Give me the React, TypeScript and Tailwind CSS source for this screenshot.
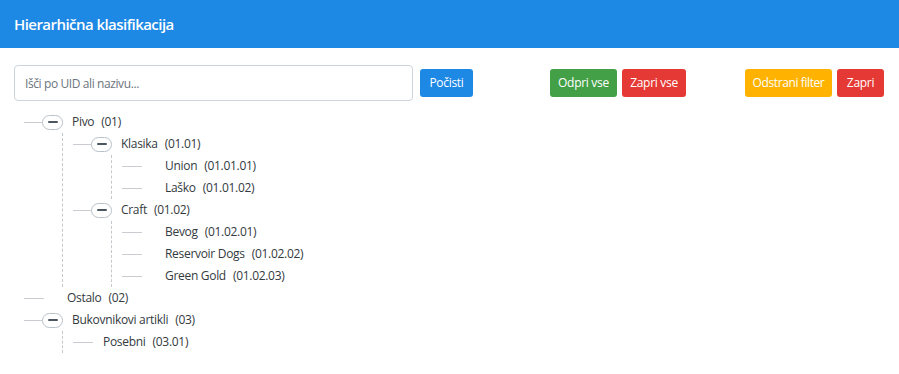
import React from "react";

type Node = {
  name: string;
  code: string;
  pad?: number;
  children?: Node[];
};

const tree: Node[] = [
  {
    name: "Pivo",
    code: "01",
    children: [
      {
        name: "Klasika",
        code: "01.01",
        children: [
          { name: "Union", code: "01.01.01" },
          { name: "Laško", code: "01.01.02" },
        ],
      },
      {
        name: "Craft",
        code: "01.02",
        children: [
          { name: "Bevog", code: "01.02.01" },
          { name: "Reservoir Dogs", code: "01.02.02" },
          { name: "Green Gold", code: "01.02.03" },
        ],
      },
    ],
  },
  { name: "Ostalo", code: "02" },
  {
    name: "Bukovnikovi artikli",
    code: "03",
    children: [{ name: "Posebni", code: "03.01", pad: 10 }],
  },
];

const Toggle = () => (
  <span className="w-[21px] h-[15px] rounded-full border border-[#b9c1c9] bg-white flex items-center justify-center shrink-0">
    <span className="w-[10px] h-[2px] bg-[#4b5661] rounded-sm" />
  </span>
);

const TreeNode = ({ node }: { node: Node }) => {
  const hasKids = !!node.children?.length;
  return (
    <div>
      <div className="h-[22px] flex items-center">
        {hasKids ? (
          <>
            <span className="w-[18px] h-px bg-[#c9cdd2]" />
            <Toggle />
            <span className="w-[9px]" />
          </>
        ) : (
          <>
            <span className="w-[20px] h-px bg-[#c9cdd2]" />
            <span style={{ width: node.pad ?? 23 }} />
          </>
        )}
        <span className="text-[#333a40]">{node.name}</span>
        <span className="ml-[7px] text-[#333a40]">({node.code})</span>
      </div>
      {hasKids && (
        <div className="ml-[38px] pl-[10px] border-l border-dashed border-[#c4c8cc]">
          {node.children!.map((c) => (
            <TreeNode key={c.code} node={c} />
          ))}
        </div>
      )}
    </div>
  );
};

export default function App() {
  return (
    <div
      className="w-[899px] h-[374px] bg-white text-[12px] tracking-[-0.3px]"
      style={{ fontFamily: '"Segoe UI", "Open Sans", sans-serif' }}
    >
      <header className="h-[48px] bg-[#1e88e5] flex items-center px-[14px]">
        <h1 className="text-white font-semibold text-[15px] tracking-[-0.55px]">
          Hierarhična klasifikacija
        </h1>
      </header>

      <div className="px-[14px] pt-[17px]">
        <div className="flex items-center">
          <input
            className="w-[399px] h-[36px] rounded-[4px] border border-[#ced4da] px-[10px] text-[12px] tracking-[-0.4px] outline-none placeholder:text-[#6c757d]"
            placeholder="Išči po UID ali nazivu..."
          />
          <button className="ml-[7px] w-[53px] h-[28px] rounded-[3px] bg-[#1e88e5] text-white text-[12px]">
            Počisti
          </button>
          <div className="ml-[77px] flex gap-[5px]">
            <button className="w-[67px] h-[28px] rounded-[3px] bg-[#43a047] text-white text-[12px]">
              Odpri vse
            </button>
            <button className="w-[64px] h-[28px] rounded-[3px] bg-[#e53935] text-white text-[12px]">
              Zapri vse
            </button>
          </div>
          <div className="ml-auto mr-[1px] flex gap-[5px]">
            <button className="w-[87px] h-[28px] rounded-[3px] bg-[#ffb300] text-white text-[12px] tracking-[-0.4px]">
              Odstrani filter
            </button>
            <button className="w-[47px] h-[28px] rounded-[3px] bg-[#e53935] text-white text-[12px]">
              Zapri
            </button>
          </div>
        </div>

        <div className="mt-[10px] pl-[10px]">
          {tree.map((n) => (
            <TreeNode key={n.code} node={n} />
          ))}
        </div>
      </div>
    </div>
  );
}
